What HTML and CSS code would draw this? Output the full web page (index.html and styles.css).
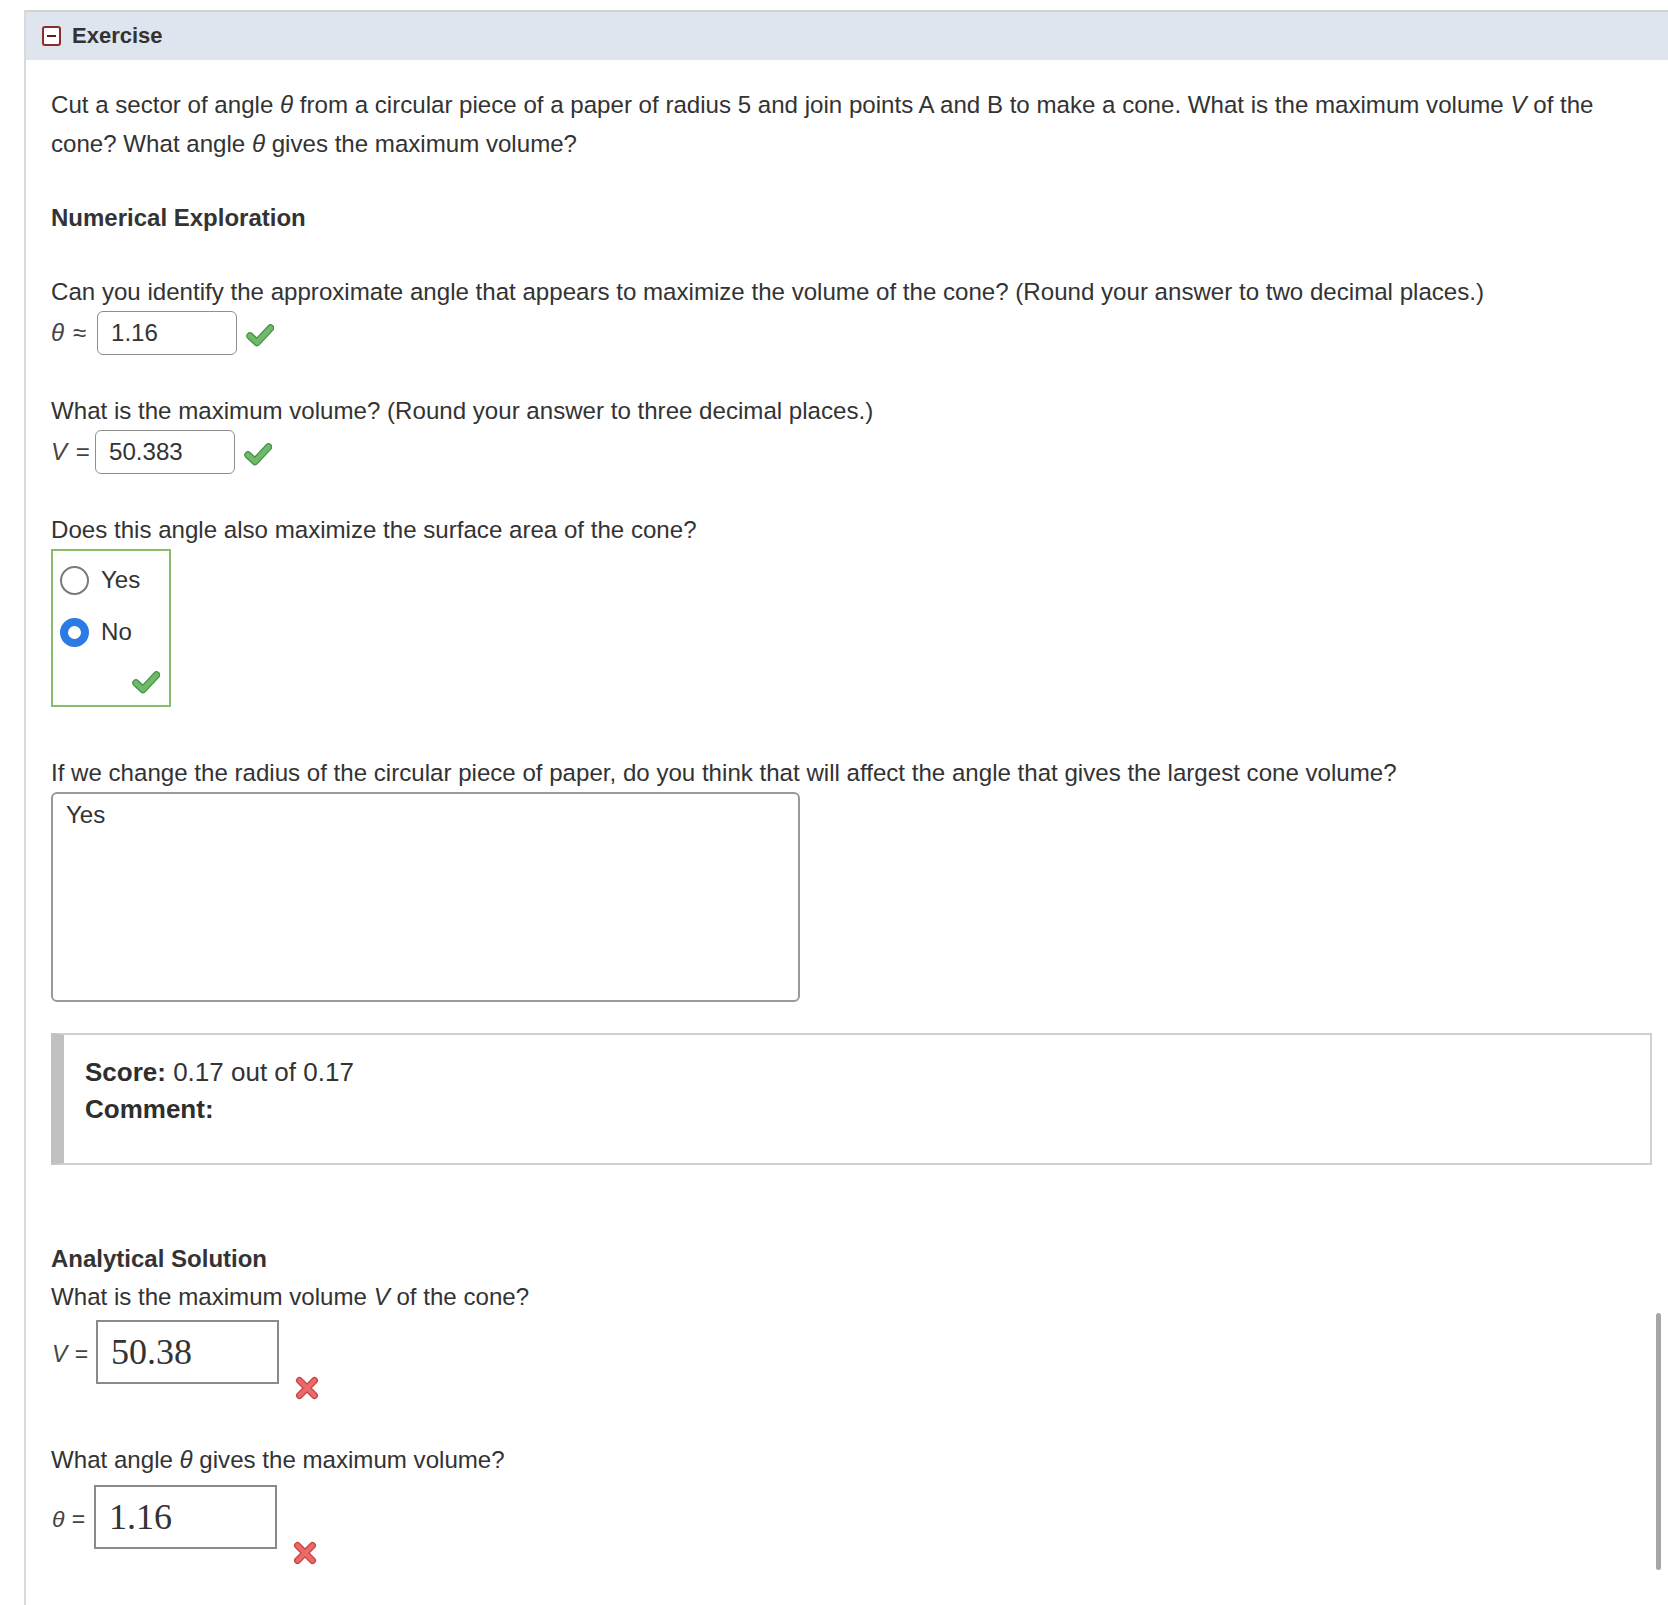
FILE: index.html
```html
<!DOCTYPE html>
<html lang="en">
<head>
<meta charset="utf-8">
<title>Exercise</title>
<link rel="stylesheet" href="styles.css">
</head>
<body>
<div class="page">
  <div class="panel">
    <div class="panel-head">
      <span class="toggle"></span>
      <span class="head-title">Exercise</span>
    </div>
    <div class="panel-body">
      <p class="intro">Cut a sector of angle <i>θ</i> from a circular piece of a paper of radius 5 and join points A and B to make a cone. What is the maximum volume <i>V</i> of the cone? What angle <i>θ</i> gives the maximum volume?</p>

      <h3 class="sub sub-num">Numerical Exploration</h3>

      <p class="qtext q-first">Can you identify the approximate angle that appears to maximize the volume of the cone? (Round your answer to two decimal places.)</p>
      <div class="answer-row">
        <span class="lbl"><i>θ</i> ≈</span>
        <span class="field field-1">1.16</span>
        <svg class="check" viewBox="0 0 28 24" width="28" height="24" aria-hidden="true">
          <path d="M4 13 L11 19.5 L24.5 5" fill="none" stroke="#478f45" stroke-width="7.5" stroke-linecap="round" stroke-linejoin="round"/>
          <path d="M4 13 L11 19.5 L24.5 5" fill="none" stroke="#6dbb69" stroke-width="5" stroke-linecap="round" stroke-linejoin="round"/>
        </svg>
      </div>

      <p class="qtext q-next">What is the maximum volume? (Round your answer to three decimal places.)</p>
      <div class="answer-row">
        <span class="lbl"><i>V</i> =</span>
        <span class="field field-2">50.383</span>
        <svg class="check" viewBox="0 0 28 24" width="28" height="24" aria-hidden="true">
          <path d="M4 13 L11 19.5 L24.5 5" fill="none" stroke="#478f45" stroke-width="7.5" stroke-linecap="round" stroke-linejoin="round"/>
          <path d="M4 13 L11 19.5 L24.5 5" fill="none" stroke="#6dbb69" stroke-width="5" stroke-linecap="round" stroke-linejoin="round"/>
        </svg>
      </div>

      <p class="qtext q-next">Does this angle also maximize the surface area of the cone?</p>
      <div class="radio-box">
        <div class="option"><span class="radio"></span><span class="opt-text">Yes</span></div>
        <div class="option"><span class="radio radio-on"></span><span class="opt-text">No</span></div>
        <div class="radio-check">
          <svg class="check" viewBox="0 0 28 24" width="28" height="24" aria-hidden="true">
            <path d="M4 13 L11 19.5 L24.5 5" fill="none" stroke="#478f45" stroke-width="7.5" stroke-linecap="round" stroke-linejoin="round"/>
            <path d="M4 13 L11 19.5 L24.5 5" fill="none" stroke="#6dbb69" stroke-width="5" stroke-linecap="round" stroke-linejoin="round"/>
          </svg>
        </div>
      </div>

      <p class="qtext q-open">If we change the radius of the circular piece of paper, do you think that will affect the angle that gives the largest cone volume?</p>
      <div class="textarea">Yes</div>

      <div class="score">
        <div><b>Score:</b> 0.17 out of 0.17</div>
        <div><b>Comment:</b></div>
      </div>

      <h3 class="sub sub-ana">Analytical Solution</h3>
      <p class="qtext">What is the maximum volume <i>V</i> of the cone?</p>
      <div class="math-row math-row-1">
        <span class="mlbl"><span class="mlbl-text"><i>V</i> =</span></span>
        <span class="mfield">50.38</span>
        <svg class="cross" viewBox="0 0 26 26" width="26" height="26" aria-hidden="true">
          <path d="M5.5 5.5 L20.5 20.5 M20.5 5.5 L5.5 20.5" fill="none" stroke="#c94444" stroke-width="7" stroke-linecap="round"/>
          <path d="M5.5 5.5 L20.5 20.5 M20.5 5.5 L5.5 20.5" fill="none" stroke="#ea6a6a" stroke-width="4.5" stroke-linecap="round"/>
        </svg>
      </div>

      <p class="qtext q-angle">What angle <i>θ</i> gives the maximum volume?</p>
      <div class="math-row">
        <span class="mlbl"><span class="mlbl-text"><i>θ</i> =</span></span>
        <span class="mfield mfield-2">1.16</span>
        <svg class="cross" viewBox="0 0 26 26" width="26" height="26" aria-hidden="true">
          <path d="M5.5 5.5 L20.5 20.5 M20.5 5.5 L5.5 20.5" fill="none" stroke="#c94444" stroke-width="7" stroke-linecap="round"/>
          <path d="M5.5 5.5 L20.5 20.5 M20.5 5.5 L5.5 20.5" fill="none" stroke="#ea6a6a" stroke-width="4.5" stroke-linecap="round"/>
        </svg>
      </div>
    </div>
  </div>
  <div class="scrollbar"></div>
</div>
</body>
</html>
```
FILE: styles.css
```css
html, body {
  margin: 0;
  padding: 0;
  background: #ffffff;
}

body {
  font-family: "Liberation Sans", Arial, Helvetica, sans-serif;
  font-size: 24.1px;
  color: #333333;
}

.page {
  position: relative;
  padding-top: 10px;
  height: 1605px;
  box-sizing: border-box;
  overflow: hidden;
}

.panel {
  margin-left: 24px;
  border-left: 2px solid #dadada;
  border-top: 2px solid #d2d2d2;
  height: 1600px;
}

.panel-head {
  height: 48px;
  background: #dee5ee;
  display: flex;
  align-items: center;
  padding-left: 16px;
  gap: 11px;
}

.toggle {
  width: 15px;
  height: 16px;
  border: 2px solid #8c2b2b;
  border-radius: 3px;
  background: #ffffff;
  display: flex;
  align-items: center;
  justify-content: center;
}

.toggle::before {
  content: "";
  width: 9px;
  height: 2px;
  background: #5b1c1c;
}

.head-title {
  font-weight: bold;
  font-size: 22px;
  color: #333333;
}

.panel-body {
  padding: 25px 16px 0 25px;
}

p, h3 {
  margin: 0;
}

.intro {
  line-height: 39px;
}

.qtext {
  line-height: 38px;
}

.sub {
  font-size: 24px;
  font-weight: bold;
  line-height: 38px;
}

.sub-num {
  margin-top: 36px;
}

.q-first {
  margin-top: 36px;
}

.q-next {
  margin-top: 37px;
}

.q-open {
  margin-top: 47px;
}

.answer-row {
  display: flex;
  align-items: center;
  height: 44px;
}

.lbl {
  color: #444444;
  width: 46px;
  white-space: nowrap;
  word-spacing: 2px;
}

.field {
  box-sizing: border-box;
  width: 140px;
  height: 44px;
  border: 1.5px solid #8e8e8e;
  border-radius: 6px;
  padding-left: 13px;
  display: flex;
  align-items: center;
  color: #333333;
}

.field-2 {
  margin-left: -2px;
}

.check {
  display: block;
  margin-left: 9px;
  margin-top: 4px;
}

.radio-box {
  box-sizing: border-box;
  width: 120px;
  border: 2px solid #88bb6c;
  padding: 3px 9px 9px 7px;
}

.option {
  display: flex;
  align-items: center;
  height: 52px;
  gap: 12px;
}

.radio {
  box-sizing: border-box;
  width: 29px;
  height: 29px;
  border-radius: 50%;
  border: 2px solid #7a7a7a;
  background: #ffffff;
}

.radio-on {
  border: 8.5px solid #2b7be5;
}

.opt-text {
  line-height: 30px;
}

.radio-check {
  display: flex;
  justify-content: flex-end;
  margin-top: 12px;
  height: 26px;
}

.radio-check .check {
  margin: 0;
}

.textarea {
  box-sizing: border-box;
  width: 749px;
  height: 210px;
  border: 2px solid #9a9a9a;
  border-radius: 6px;
  padding: 3px 13px;
  line-height: 36px;
}

.score {
  margin-top: 31px;
  box-sizing: border-box;
  height: 132px;
  border: 2px solid #d0d0d0;
  border-left: 13px solid #c0c0c0;
  padding: 19px 0 0 21px;
  font-size: 26px;
  line-height: 37px;
}

.score b {
  color: #2e2e2e;
}

.sub-ana {
  margin-top: 75px;
}

.math-row {
  display: flex;
  align-items: flex-start;
  margin-top: 6px;
}

.math-row-1 {
  margin-top: 4px;
}

.mlbl {
  width: 45px;
  height: 64px;
  display: flex;
  align-items: center;
  padding-top: 4px;
  padding-left: 1px;
  box-sizing: border-box;
  font-size: 23px;
  word-spacing: 1px;
  color: #444444;
  white-space: nowrap;
}

.mlbl-text {
  display: block;
}

.mfield {
  box-sizing: border-box;
  width: 183px;
  height: 64px;
  border: 2px solid #8a8a8a;
  padding-left: 13px;
  display: flex;
  align-items: center;
  font-family: "Liberation Serif", "Times New Roman", serif;
  font-size: 36px;
  color: #333333;
}

.mfield-2 {
  margin-left: -2px;
}

.cross {
  display: block;
  margin-left: 15px;
  margin-top: 55px;
}

.q-angle {
  margin-top: 40px;
}

.scrollbar {
  position: absolute;
  right: 7px;
  top: 1313px;
  width: 5px;
  height: 257px;
  border-radius: 3px;
  background: #a6a6a6;
}
```
